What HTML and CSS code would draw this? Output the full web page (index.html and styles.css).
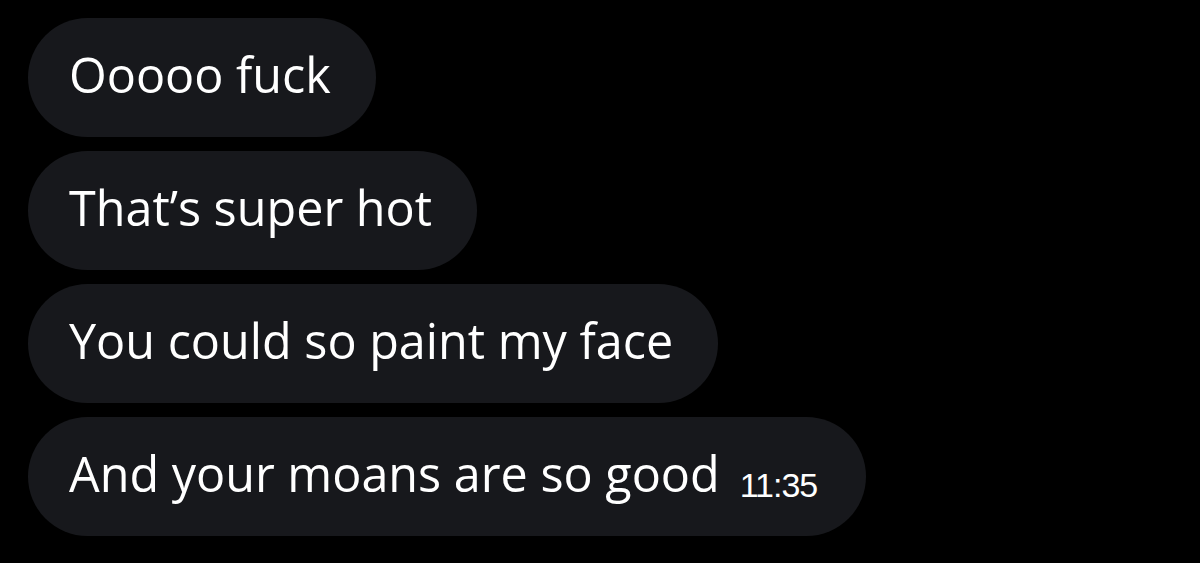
FILE: index.html
```html
<!DOCTYPE html>
<html>
<head>
<meta charset="utf-8">
<link rel="stylesheet" href="styles.css">
</head>
<body>
<div class="chat">
  <div class="bubble">Ooooo fuck</div>
  <div class="bubble">That’s super hot</div>
  <div class="bubble">You could so paint my face</div>
  <div class="bubble">And your moans are so good<span class="time">11:35</span></div>
</div>
</body>
</html>
```
FILE: styles.css
```css
html, body {
  margin: 0;
  padding: 0;
  background: #000;
}
.chat {
  display: flex;
  flex-direction: column;
  align-items: flex-start;
  gap: 14px;
  padding: 18px 0 0 28px;
}
.bubble {
  box-sizing: border-box;
  height: 119px;
  display: flex;
  align-items: center;
  padding: 0 45px 6px 41px;
  border-radius: 60px;
  background: #17181c;
  color: #fff;
  font-family: "Open Sans", "Liberation Sans", sans-serif;
  font-size: 48.5px;
  letter-spacing: 0;
  line-height: 1;
  white-space: nowrap;
}
.time {
  font-family: "Liberation Sans", Arial, sans-serif;
  font-size: 34px;
  letter-spacing: -1px;
  margin-left: 20px;
  margin-right: 4px;
  position: relative;
  top: 11px;
}
```
